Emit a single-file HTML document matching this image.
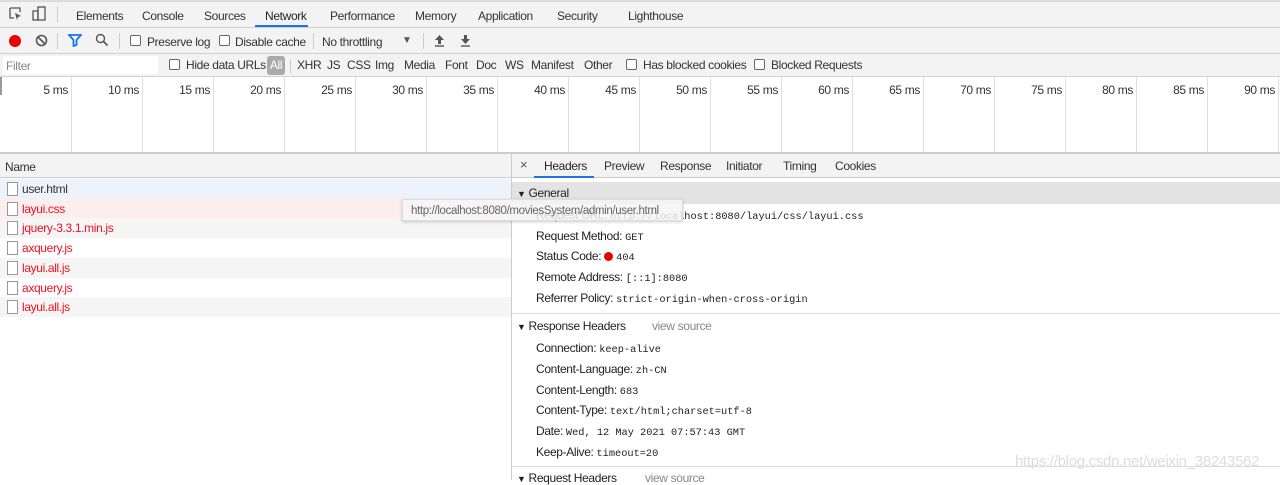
<!DOCTYPE html>
<html><head><meta charset="utf-8"><style>
*{margin:0;padding:0;box-sizing:border-box}
body{width:1280px;height:480px;overflow:hidden;background:#fff;font-family:"Liberation Sans",sans-serif;font-size:12px;letter-spacing:-0.35px;color:#333;position:relative}
.a{position:absolute;white-space:nowrap}
.cb{position:absolute;width:11px;height:11px;border:1px solid #666;border-radius:2px;background:#fff}
.mono{font-family:"Liberation Mono",monospace;font-size:10.3px;letter-spacing:0}
.g{position:absolute;top:77px;width:1px;height:75px;background:#e0e0e0}
.t{position:absolute;top:83px;width:60px;text-align:right;color:#333}
.row{position:absolute;left:0;width:511px;height:20px}
.fi{position:absolute;left:7px;width:11px;height:14px;border:1px solid #999;background:#fff}
.nm{position:absolute;left:22px;top:3px;color:#e12;}
.hl{position:absolute;left:536px;color:#222}
</style></head><body>
<div class="a" style="left:0;top:0;width:1280px;height:28px;background:#f3f3f3;border-bottom:1px solid #d0d0d0;border-top:2px solid #ddd"></div>
<svg class="a" style="left:9px;top:7px" width="14" height="14"><path d="M1 1h10v4M1 1v10h4" fill="none" stroke="#555" stroke-width="1.3"/><path d="M6 6l6 3-3 1-1 3z" fill="#555"/></svg>
<svg class="a" style="left:32px;top:6px" width="14" height="16"><rect x="6" y="1" width="7" height="13" fill="none" stroke="#555" stroke-width="1.3"/><rect x="1" y="5" width="5" height="9" fill="none" stroke="#555" stroke-width="1.3"/></svg>
<div class="a" style="left:57px;top:6px;width:1px;height:16px;background:#ccc"></div>
<div class="a" style="left:76px;top:9px">Elements</div>
<div class="a" style="left:142px;top:9px">Console</div>
<div class="a" style="left:204px;top:9px">Sources</div>
<div class="a" style="left:265px;top:9px;color:#222">Network</div>
<div class="a" style="left:208px;top:25px;width:53px;height:2px;background:#1a73e8;left:255px"></div>
<div class="a" style="left:330px;top:9px">Performance</div>
<div class="a" style="left:415px;top:9px">Memory</div>
<div class="a" style="left:478px;top:9px">Application</div>
<div class="a" style="left:557px;top:9px">Security</div>
<div class="a" style="left:628px;top:9px">Lighthouse</div>
<div class="a" style="left:0;top:28px;width:1280px;height:26px;background:#f3f3f3;border-bottom:1px solid #d0d0d0"></div>
<div class="a" style="left:9px;top:35px;width:12px;height:12px;border-radius:50%;background:#e00"></div>
<svg class="a" style="left:35px;top:34px" width="13" height="13"><circle cx="6.5" cy="6.5" r="5" fill="none" stroke="#555" stroke-width="1.6"/><path d="M3 3l7 7" stroke="#555" stroke-width="1.6"/></svg>
<div class="a" style="left:57px;top:33px;width:1px;height:16px;background:#ccc"></div>
<svg class="a" style="left:68px;top:34px" width="14" height="13"><path d="M1 1h12l-4.5 5v5l-3 1v-6z" fill="none" stroke="#1a73e8" stroke-width="1.8"/></svg>
<svg class="a" style="left:95px;top:33px" width="14" height="14"><circle cx="5.5" cy="5.5" r="4" fill="none" stroke="#555" stroke-width="1.4"/><path d="M8.5 8.5l4 4" stroke="#555" stroke-width="1.6"/></svg>
<div class="a" style="left:119px;top:33px;width:1px;height:16px;background:#ccc"></div>
<div class="cb" style="left:130px;top:35px"></div><div class="a" style="left:147px;top:35px">Preserve log</div>
<div class="cb" style="left:219px;top:35px"></div><div class="a" style="left:235px;top:35px">Disable cache</div>
<div class="a" style="left:313px;top:33px;width:1px;height:16px;background:#ccc"></div>
<div class="a" style="left:322px;top:35px">No throttling</div>
<div class="a" style="left:402px;top:35px;font-size:10px;color:#555">▼</div>
<div class="a" style="left:423px;top:33px;width:1px;height:16px;background:#ccc"></div>
<svg class="a" style="left:434px;top:34px" width="11" height="13"><path d="M5.5 1l-4.5 5h3v4h3v-4h3z" fill="#555"/><path d="M1 12h9" stroke="#555" stroke-width="1.4"/></svg>
<svg class="a" style="left:460px;top:34px" width="11" height="13"><path d="M5.5 10l-4.5-5h3v-4h3v4h3z" fill="#555"/><path d="M1 12h9" stroke="#555" stroke-width="1.4"/></svg>
<div class="a" style="left:0;top:54px;width:1280px;height:23px;background:#f3f3f3;border-bottom:1px solid #d0d0d0"></div>
<div class="a" style="left:3px;top:56px;width:155px;height:18px;background:#fff"></div>
<div class="a" style="left:6px;top:59px;color:#888">Filter</div>
<div class="cb" style="left:169px;top:59px"></div><div class="a" style="left:186px;top:58px">Hide data URLs</div>
<div class="a" style="left:267px;top:56px;width:18px;height:19px;background:#aaa;border-radius:3px;color:#fff;text-align:center;line-height:19px">All</div>
<div class="a" style="left:290px;top:59px;width:1px;height:14px;background:#ccc"></div>
<div class="a" style="left:297px;top:58px">XHR</div>
<div class="a" style="left:327px;top:58px">JS</div>
<div class="a" style="left:347px;top:58px">CSS</div>
<div class="a" style="left:375px;top:58px">Img</div>
<div class="a" style="left:404px;top:58px">Media</div>
<div class="a" style="left:445px;top:58px">Font</div>
<div class="a" style="left:476px;top:58px">Doc</div>
<div class="a" style="left:505px;top:58px">WS</div>
<div class="a" style="left:531px;top:58px">Manifest</div>
<div class="a" style="left:584px;top:58px">Other</div>
<div class="cb" style="left:626px;top:59px"></div><div class="a" style="left:643px;top:58px">Has blocked cookies</div>
<div class="cb" style="left:754px;top:59px"></div><div class="a" style="left:771px;top:58px">Blocked Requests</div>
<div class="a" style="left:0;top:77px;width:2px;height:18px;background:#999"></div>
<div class="g" style="left:71px"></div><div class="t" style="left:8px">5 ms</div>
<div class="g" style="left:142px"></div><div class="t" style="left:79px">10 ms</div>
<div class="g" style="left:213px"></div><div class="t" style="left:150px">15 ms</div>
<div class="g" style="left:284px"></div><div class="t" style="left:221px">20 ms</div>
<div class="g" style="left:355px"></div><div class="t" style="left:292px">25 ms</div>
<div class="g" style="left:426px"></div><div class="t" style="left:363px">30 ms</div>
<div class="g" style="left:497px"></div><div class="t" style="left:434px">35 ms</div>
<div class="g" style="left:568px"></div><div class="t" style="left:505px">40 ms</div>
<div class="g" style="left:639px"></div><div class="t" style="left:576px">45 ms</div>
<div class="g" style="left:710px"></div><div class="t" style="left:647px">50 ms</div>
<div class="g" style="left:781px"></div><div class="t" style="left:718px">55 ms</div>
<div class="g" style="left:852px"></div><div class="t" style="left:789px">60 ms</div>
<div class="g" style="left:923px"></div><div class="t" style="left:860px">65 ms</div>
<div class="g" style="left:994px"></div><div class="t" style="left:931px">70 ms</div>
<div class="g" style="left:1065px"></div><div class="t" style="left:1002px">75 ms</div>
<div class="g" style="left:1136px"></div><div class="t" style="left:1073px">80 ms</div>
<div class="g" style="left:1207px"></div><div class="t" style="left:1144px">85 ms</div>
<div class="g" style="left:1278px"></div><div class="t" style="left:1215px">90 ms</div>
<div class="a" style="left:0;top:152px;width:1280px;height:2px;background:#ccc"></div>
<div class="a" style="left:0;top:154px;width:511px;height:24px;background:#f3f3f3;border-bottom:1px solid #ccc"></div>
<div class="a" style="left:5px;top:160px">Name</div>
<div class="row" style="top:179px;background:#eef3fb"><div class="fi" style="top:3px"></div><div class="nm" style="color:#333">user.html</div></div>
<div class="row" style="top:199px;background:#fdeeee"><div class="fi" style="top:3px"></div><div class="nm">layui.css</div></div>
<div class="row" style="top:218px;background:#f5f5f5"><div class="fi" style="top:3px"></div><div class="nm">jquery-3.3.1.min.js</div></div>
<div class="row" style="top:238px"><div class="fi" style="top:3px"></div><div class="nm">axquery.js</div></div>
<div class="row" style="top:258px;background:#f5f5f5"><div class="fi" style="top:3px"></div><div class="nm">layui.all.js</div></div>
<div class="row" style="top:278px"><div class="fi" style="top:3px"></div><div class="nm">axquery.js</div></div>
<div class="row" style="top:297px;background:#f5f5f5"><div class="fi" style="top:3px"></div><div class="nm">layui.all.js</div></div>
<div class="a" style="left:511px;top:154px;width:1px;height:326px;background:#ccc"></div>
<div class="a" style="left:512px;top:154px;width:768px;height:24px;background:#f3f3f3;border-bottom:1px solid #ccc"></div>
<div class="a" style="left:520px;top:157px;font-size:13px;color:#555">×</div>
<div class="a" style="left:544px;top:159px;color:#222">Headers</div>
<div class="a" style="left:534px;top:176px;width:60px;height:2px;background:#1a73e8"></div>
<div class="a" style="left:604px;top:159px">Preview</div>
<div class="a" style="left:660px;top:159px">Response</div>
<div class="a" style="left:726px;top:159px">Initiator</div>
<div class="a" style="left:783px;top:159px">Timing</div>
<div class="a" style="left:835px;top:159px">Cookies</div>
<div class="a" style="left:512px;top:182px;width:768px;height:22px;background:#e3e3e3"></div>
<div class="a" style="left:517px;top:186px;color:#222"><span style="font-size:9px">▼</span> General</div>
<div class="hl" style="top:208px">Request URL: <span class="mono" style="color:#222">http://localhost:8080/layui/css/layui.css</span></div>
<div class="hl" style="top:229px">Request Method: <span class="mono">GET</span></div>
<div class="hl" style="top:249px">Status Code: <span style="display:inline-block;width:9px;height:9px;border-radius:50%;background:#e00;vertical-align:-1px"></span> <span class="mono">404</span></div>
<div class="hl" style="top:270px">Remote Address: <span class="mono">[::1]:8080</span></div>
<div class="hl" style="top:291px">Referrer Policy: <span class="mono">strict-origin-when-cross-origin</span></div>
<div class="a" style="left:512px;top:313px;width:768px;height:1px;background:#ddd"></div>
<div class="a" style="left:517px;top:319px;color:#222"><span style="font-size:9px">▼</span> Response Headers</div>
<div class="a" style="left:652px;top:319px;color:#888">view source</div>
<div class="hl" style="top:341px">Connection: <span class="mono">keep-alive</span></div>
<div class="hl" style="top:362px">Content-Language: <span class="mono">zh-CN</span></div>
<div class="hl" style="top:383px">Content-Length: <span class="mono">683</span></div>
<div class="hl" style="top:403px">Content-Type: <span class="mono">text/html;charset=utf-8</span></div>
<div class="hl" style="top:424px">Date: <span class="mono">Wed, 12 May 2021 07:57:43 GMT</span></div>
<div class="hl" style="top:445px">Keep-Alive: <span class="mono">timeout=20</span></div>
<div class="a" style="left:512px;top:466px;width:768px;height:1px;background:#ddd"></div>
<div class="a" style="left:517px;top:471px;color:#222"><span style="font-size:9px">▼</span> Request Headers</div>
<div class="a" style="left:645px;top:471px;color:#888">view source</div>
<div class="a" style="left:1015px;top:453px;color:#ddd;font-size:15px;letter-spacing:-0.3px">https://blog.csdn.net/weixin_38243562</div>
<div class="a" style="left:402px;top:199px;width:281px;height:22px;background:rgba(245,245,245,0.85);border:1px solid #ddd;box-shadow:0 1px 3px rgba(0,0,0,.2);color:#666;padding:5px 0 0 8px;font-size:11.5px">http://localhost:8080/moviesSystem/admin/user.html</div>
</body></html>
